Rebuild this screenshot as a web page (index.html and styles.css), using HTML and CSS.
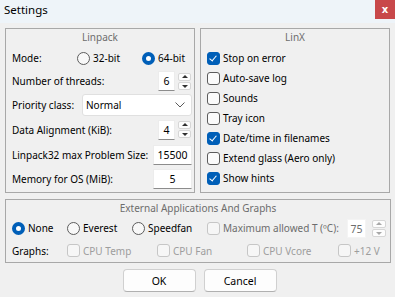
FILE: index.html
```html
<!DOCTYPE html>
<html lang="en">
<head>
  <meta charset="UTF-8">
  <title>Settings</title>
  <link rel="stylesheet" href="styles.css">
</head>
<body>

<div class="window">
  <div class="titlebar">
    <span class="title">Settings</span>
    <button class="close">x</button>
  </div>

  <div class="groups">
    <div class="group linpack">
      <div class="group-title">Linpack</div>
      <div class="row r-mode">
        <span class="lbl w-mode">Mode:</span>
        <label class="opt w-32"><span class="radio"></span>32-bit</label>
        <label class="opt"><span class="radio on"></span>64-bit</label>
      </div>
      <div class="row r-threads">
        <span class="lbl">Number of threads:</span>
        <div class="spin">
          <span class="field small">6</span>
          <span class="arrows"><span class="up"></span><span class="down"></span></span>
        </div>
      </div>
      <div class="row r-priority">
        <span class="lbl">Priority class:</span>
        <div class="select">
          <span>Normal</span>
          <svg width="10" height="6" viewBox="0 0 10 6"><path d="M0.5 0.5 L5 5 L9.5 0.5" fill="none" stroke="#5a5a5a" stroke-width="1"/></svg>
        </div>
      </div>
      <div class="row r-align">
        <span class="lbl">Data Alignment (KiB):</span>
        <div class="spin">
          <span class="field small">4</span>
          <span class="arrows"><span class="up"></span><span class="down"></span></span>
        </div>
      </div>
      <div class="row r-size">
        <span class="lbl">Linpack32 max Problem Size:</span>
        <span class="field wide">15500</span>
      </div>
      <div class="row r-mem">
        <span class="lbl">Memory for OS (MiB):</span>
        <span class="field wide">5</span>
      </div>
    </div>

    <div class="group linx">
      <div class="group-title">LinX</div>
      <div class="checks">
        <label class="opt"><span class="check on"></span>Stop on error</label>
        <label class="opt"><span class="check"></span>Auto-save log</label>
        <label class="opt"><span class="check"></span>Sounds</label>
        <label class="opt"><span class="check"></span>Tray icon</label>
        <label class="opt"><span class="check on"></span>Date/time in filenames</label>
        <label class="opt"><span class="check"></span>Extend glass (Aero only)</label>
        <label class="opt"><span class="check on"></span>Show hints</label>
      </div>
    </div>
  </div>

  <div class="group external">
    <div class="group-title">External Applications And Graphs</div>
    <div class="row r-apps">
      <label class="opt w-none"><span class="radio on"></span>None</label>
      <label class="opt w-everest"><span class="radio"></span>Everest</label>
      <label class="opt w-speedfan"><span class="radio"></span>Speedfan</label>
      <label class="opt disabled max"><span class="check"></span>Maximum allowed T (ºC):</label>
      <div class="spin disabled temp-spin">
        <span class="field temp">75</span>
        <span class="arrows"><span class="up"></span><span class="down"></span></span>
      </div>
    </div>
    <div class="row r-graphs">
      <span class="lbl w-graphs">Graphs:</span>
      <label class="opt disabled w-temp"><span class="check"></span>CPU Temp</label>
      <label class="opt disabled w-fan"><span class="check"></span>CPU Fan</label>
      <label class="opt disabled w-vcore"><span class="check"></span>CPU Vcore</label>
      <label class="opt disabled"><span class="check"></span>+12 V</label>
    </div>
  </div>

  <div class="buttons">
    <button class="btn">OK</button>
    <button class="btn">Cancel</button>
  </div>
</div>

</body>
</html>
```

FILE: styles.css
```css
* {
  box-sizing: border-box;
}

body {
  margin: 0;
  font-family: 'Noto Sans', 'Open Sans', sans-serif;
  font-size: 10px;
  color: #000;
  background-color: #f0f0f0;
}

.window {
  width: 395px;
  height: 297px;
  overflow: hidden;
}

.titlebar {
  height: 23px;
  background-color: #eef4f9;
  display: flex;
  align-items: flex-start;
  justify-content: space-between;
}

.title {
  padding: 2px 0 0 4px;
  font-size: 11.5px;
  line-height: 16px;
}

.close {
  width: 20px;
  height: 19px;
  border: none;
  background-color: #c8484a;
  color: white;
  font-family: 'DejaVu Sans', sans-serif;
  font-weight: bold;
  font-size: 10px;
  line-height: 19px;
  padding: 0 0 2px;
}

.groups {
  display: flex;
  gap: 5px;
  padding: 5px 0 0 5px;
}

.group {
  border: 1px solid #a8a8a8;
  display: flex;
  flex-direction: column;
}

.linpack,
.linx {
  width: 190px;
  height: 165px;
}

.group-title {
  height: 17px;
  line-height: 17px;
  text-align: center;
  color: #6d6d6d;
}

.row {
  display: flex;
  align-items: center;
  justify-content: space-between;
  padding: 0 2px 0 6px;
  white-space: nowrap;
}

.row > * {
  flex-shrink: 0;
}

.r-mode { height: 24px; justify-content: flex-start; }
.r-threads { height: 22px; }
.r-priority { height: 25px; }
.r-align { height: 25px; }
.r-size { height: 25px; }
.r-mem { height: 24px; }

.w-mode { width: 65px; }
.w-32 { width: 65px; }

.opt {
  display: flex;
  align-items: center;
  gap: 3px;
  white-space: nowrap;
}

.radio {
  width: 13px;
  height: 13px;
  border-radius: 50%;
  border: 1px solid #5c5c5c;
  background-color: #f8f8f8;
  flex-shrink: 0;
}

.radio.on {
  border: 4px solid #005fb8;
  background-color: #fff;
}

.check {
  width: 13px;
  height: 13px;
  border-radius: 3px;
  border: 1px solid #5c5c5c;
  background-color: #fbfbfb;
  flex-shrink: 0;
  position: relative;
}

.check.on {
  border-color: #005fb8;
  background-color: #005fb8;
}

.check.on::after {
  content: "";
  position: absolute;
  left: 3px;
  top: 1px;
  width: 3px;
  height: 6px;
  border-right: 1px solid #fff;
  border-bottom: 1px solid #fff;
  transform: rotate(40deg);
}

.disabled {
  color: #9d9d9d;
}

.disabled .check {
  border-color: #c6c6c6;
  background-color: #f6f6f6;
}

.max {
  color: #6d6d6d;
}

.field {
  background-color: #fff;
  border: 1px solid #ececec;
  border-bottom-color: #8c8c8c;
  height: 20px;
  line-height: 18px;
  text-align: center;
  font-size: 10.5px;
}

.field.small { width: 17px; }
.field.wide { width: 39px; }

.spin {
  display: flex;
  align-items: center;
  gap: 3px;
  margin-right: 1px;
}

.arrows {
  display: flex;
  flex-direction: column;
  gap: 1px;
}

.arrows span {
  width: 13px;
  height: 8px;
  background-color: #fdfdfd;
  border: 1px solid #d6d6d6;
  border-radius: 2px;
  position: relative;
}

.arrows span::after {
  content: "";
  position: absolute;
  left: 3px;
  width: 0;
  height: 0;
  border-left: 3px solid transparent;
  border-right: 3px solid transparent;
}

.arrows .up::after {
  top: 1px;
  border-bottom: 3px solid #303030;
}

.arrows .down::after {
  top: 2px;
  border-top: 3px solid #303030;
}

.disabled .arrows .up::after { border-bottom-color: #a8a8a8; }
.disabled .arrows .down::after { border-top-color: #a8a8a8; }

.disabled .field {
  border-color: #f4f4f4;
  color: #6d6d6d;
}

.select {
  width: 110px;
  height: 22px;
  background-color: #fff;
  border: 1px solid #e0e0e0;
  border-radius: 3px;
  display: flex;
  align-items: center;
  justify-content: space-between;
  padding: 0 6px 0 3px;
}

.checks {
  display: flex;
  flex-direction: column;
  padding: 2px 0 0 6px;
}

.checks .opt {
  height: 20px;
}

.external {
  width: 386px;
  height: 64px;
  margin: 6px 0 0 5px;
}

.external .group-title {
  height: 16px;
  line-height: 16px;
}

.r-apps { height: 24px; justify-content: flex-start; padding-right: 3px; }
.r-graphs { height: 21px; justify-content: flex-start; }

.w-none { width: 55px; }
.w-everest { width: 65px; }
.w-speedfan { width: 75px; }
.r-apps .max { flex: 1; flex-shrink: 1; }
.temp-spin { gap: 6px; }
.temp-spin .arrows span { width: 14px; }
.field.temp { width: 19px; height: 19px; }

.w-graphs { width: 55px; }
.w-temp { width: 90px; }
.w-fan { width: 90px; }
.w-vcore { width: 91px; }

.buttons {
  display: flex;
  justify-content: center;
  gap: 8px;
  padding-top: 6px;
  padding-left: 4px;
}

.btn {
  width: 73px;
  height: 23px;
  font-family: inherit;
  font-size: 10.5px;
  color: #000;
  background-color: #fdfdfd;
  border: 1px solid #d0d0d0;
  border-bottom-color: #b0b0b0;
  border-radius: 4px;
}
```
